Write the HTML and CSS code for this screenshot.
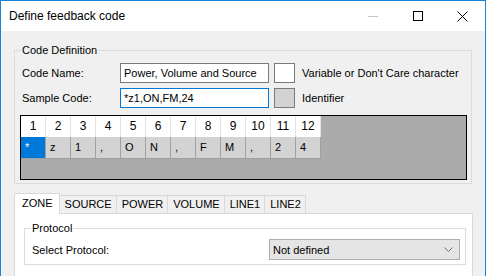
FILE: index.html
```html
<!DOCTYPE html>
<html>
<head>
  <title>Define feedback code</title>
  <link rel="stylesheet" href="styles.css">
</head>
<body>
  <div class="window">
    <!-- Title bar -->
    <div class="titlebar">
      <span class="title">Define feedback code</span>
      <div class="caption-btns">
        <span class="cap-btn">
          <svg width="10" height="10" viewBox="0 0 10 10"><path d="M0 5.5H10" stroke="#c6c6c6" stroke-width="1"/></svg>
        </span>
        <span class="cap-btn">
          <svg width="10" height="10" viewBox="0 0 10 10"><rect x="0.5" y="0.5" width="9" height="9" fill="none" stroke="#000" stroke-width="1"/></svg>
        </span>
        <span class="cap-btn">
          <svg width="11" height="11" viewBox="0 0 11 11"><path d="M0.5 0.5L10.5 10.5M10.5 0.5L0.5 10.5" stroke="#000" stroke-width="1"/></svg>
        </span>
      </div>
    </div>

    <div class="client">
      <!-- Code definition group -->
      <fieldset class="group code-def">
        <legend>Code Definition</legend>
        <div class="field-row">
          <label class="lbl">Code Name:</label>
          <input class="textbox" type="text" value="Power, Volume and Source">
          <span class="swatch"></span>
          <span class="hint">Variable or Don't Care character</span>
        </div>
        <div class="field-row">
          <label class="lbl">Sample Code:</label>
          <input class="textbox focused" type="text" value="*z1,ON,FM,24">
          <span class="swatch grey"></span>
          <span class="hint">Identifier</span>
        </div>

        <div class="grid">
          <div class="grid-row head">
            <span>1</span><span>2</span><span>3</span><span>4</span><span>5</span><span>6</span>
            <span>7</span><span>8</span><span>9</span><span>10</span><span>11</span><span>12</span>
          </div>
          <div class="grid-row data">
            <span class="sel">*</span><span>z</span><span>1</span><span>,</span><span>O</span><span>N</span>
            <span>,</span><span>F</span><span>M</span><span>,</span><span>2</span><span>4</span>
          </div>
        </div>
      </fieldset>

      <!-- Tab control -->
      <div class="tabs">
        <div class="tab-strip">
          <span class="tab active">ZONE</span>
          <span class="tab">SOURCE</span>
          <span class="tab">POWER</span>
          <span class="tab">VOLUME</span>
          <span class="tab">LINE1</span>
          <span class="tab">LINE2</span>
        </div>
        <div class="tab-panel">
          <fieldset class="group protocol">
            <legend>Protocol</legend>
            <div class="field-row">
              <label class="lbl">Select Protocol:</label>
              <div class="combo">
                <span>Not defined</span>
                <svg width="9" height="5" viewBox="0 0 9 5"><path d="M0.5 0.5L4.5 4.5L8.5 0.5" fill="none" stroke="#6d6d6d" stroke-width="1"/></svg>
              </div>
            </div>
          </fieldset>
        </div>
      </div>
    </div>
  </div>
</body>
</html>
```

FILE: styles.css
```css
body {
  margin: 0;
  font-family: "Liberation Sans", Arial, sans-serif;
  font-size: 11px;
  color: #000;
  background: #fff;
}

.window {
  width: 486px;
  height: 276px;
  box-sizing: border-box;
  border: 1px solid #1883d7;
  border-bottom: none;
  background: #f0f0f0;
  display: flex;
  flex-direction: column;
  overflow: hidden;
}

/* Title bar */
.titlebar {
  height: 30px;
  flex-shrink: 0;
  background: #fff;
  display: flex;
  align-items: center;
  padding-left: 8px;
}

.title {
  font-size: 12px;
}

.caption-btns {
  margin-left: auto;
  display: flex;
  height: 100%;
}

.cap-btn {
  width: 45px;
  display: flex;
  align-items: center;
  justify-content: center;
}

.client {
  padding: 12px 13px 0 13px;
}

/* Group boxes */
.group {
  margin: 0;
  border: 1px solid #dcdcdc;
  min-inline-size: 0;
}

.group legend {
  padding: 0 1px;
  margin-left: 1px;
  line-height: 14px;
}

.code-def {
  padding: 6px 4px 3px 5px;
}

.field-row {
  display: flex;
  align-items: center;
  height: 20px;
  padding-left: 2px;
}

.field-row + .field-row {
  margin-top: 5px;
}

.lbl {
  width: 98px;
}

.textbox {
  width: 149px;
  height: 20px;
  box-sizing: border-box;
  margin: 0;
  padding: 0 3px;
  border: 1px solid #7a7a7a;
  outline: none;
  font: inherit;
  font-size: 11px;
  background: #fff;
}

.textbox.focused {
  border-color: #0078d7;
}

.swatch {
  width: 21px;
  height: 20px;
  box-sizing: border-box;
  border: 1px solid #7a7a7a;
  background: #fff;
  margin-left: 5px;
}

.swatch.grey {
  background: #d3d3d3;
}

.hint {
  margin-left: 7px;
}

/* Character grid */
.grid {
  margin-top: 7px;
  height: 65px;
  box-sizing: border-box;
  border: 1px solid #000;
  background: #ababab;
}

.grid-row {
  display: flex;
}

.grid-row span {
  width: 25px;
  box-sizing: border-box;
  flex-shrink: 0;
}

.grid-row.head span {
  height: 21px;
  line-height: 21px;
  text-align: center;
  font-size: 12px;
  background: #fff;
  border-right: 1px solid #e3e3e3;
}

.grid-row.data span {
  height: 22px;
  line-height: 21px;
  padding-left: 4px;
  background: #d3d3d3;
  border-right: 1px solid #a0a0a0;
  border-bottom: 1px solid #a0a0a0;
}

.grid-row.data span.sel {
  background: #0078d7;
  color: #fff;
}

/* Tabs */
.tabs {
  margin-top: 9px;
  margin-right: -1px;
}

.tab-strip {
  display: flex;
  align-items: flex-end;
  height: 20px;
  position: relative;
  z-index: 1;
}

.tab {
  height: 18px;
  box-sizing: border-box;
  padding: 0 4px 0 5px;
  line-height: 17px;
  border: 1px solid #d9d9d9;
  border-bottom: none;
  border-left: none;
  background: #f0f0f0;
}

.tab.active {
  height: 21px;
  margin-bottom: -1px;
  line-height: 19px;
  border-left: 1px solid #d9d9d9;
  background: #fff;
  padding: 0 6px 0 7px;
}

.tab-panel {
  background: #fff;
  border: 1px solid #d9d9d9;
  height: 80px;
  padding: 7px 6px 0 9px;
}

.protocol {
  padding: 4px 5px 4px 5px;
}

.protocol .field-row {
  height: 21px;
}

.protocol .lbl {
  width: auto;
}

.combo {
  margin-left: auto;
  width: 191px;
  height: 21px;
  box-sizing: border-box;
  border: 1px solid #adadad;
  background: #e5e5e5;
  display: flex;
  align-items: center;
  padding: 0 6px 0 3px;
}

.combo svg {
  margin-left: auto;
}
```
